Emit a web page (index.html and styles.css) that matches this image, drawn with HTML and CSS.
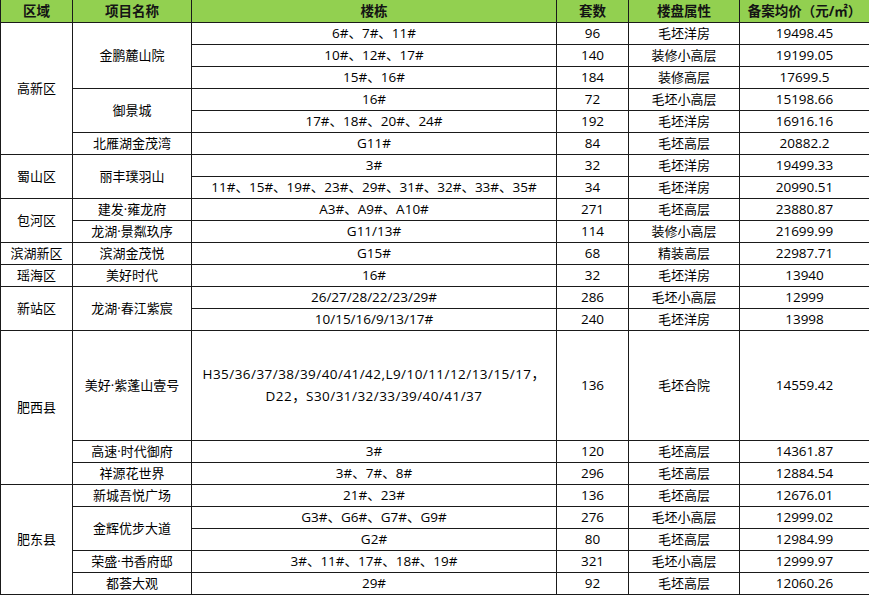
FILE: index.html
```html
<!DOCTYPE html>
<html lang="zh-CN">
<head>
<meta charset="utf-8">
<title>备案均价</title>
<link rel="stylesheet" href="styles.css">
</head>
<body>
<table class="price-table">
  <colgroup>
    <col class="c-area"><col class="c-name"><col class="c-bld"><col class="c-num"><col class="c-type"><col class="c-price">
  </colgroup>
  <thead>
    <tr class="head">
      <th>区域</th><th>项目名称</th><th>楼栋</th><th>套数</th><th>楼盘属性</th><th>备案均价（元/㎡）</th>
    </tr>
  </thead>
  <tbody>
    <tr><td rowspan="6">高新区</td><td rowspan="3">金鹏麓山院</td><td>6#、7#、11#</td><td>96</td><td>毛坯洋房</td><td>19498.45</td></tr>
    <tr><td>10#、12#、17#</td><td>140</td><td>装修小高层</td><td>19199.05</td></tr>
    <tr><td>15#、16#</td><td>184</td><td>装修高层</td><td>17699.5</td></tr>
    <tr><td rowspan="2">御景城</td><td>16#</td><td>72</td><td>毛坯小高层</td><td>15198.66</td></tr>
    <tr><td>17#、18#、20#、24#</td><td>192</td><td>毛坯洋房</td><td>16916.16</td></tr>
    <tr><td>北雁湖金茂湾</td><td>G11#</td><td>84</td><td>毛坯高层</td><td>20882.2</td></tr>

    <tr><td rowspan="2">蜀山区</td><td rowspan="2">丽丰璞羽山</td><td>3#</td><td>32</td><td>毛坯洋房</td><td>19499.33</td></tr>
    <tr><td>11#、15#、19#、23#、29#、31#、32#、33#、35#</td><td>34</td><td>毛坯洋房</td><td>20990.51</td></tr>

    <tr><td rowspan="2">包河区</td><td>建发·雍龙府</td><td>A3#、A9#、A10#</td><td>271</td><td>毛坯高层</td><td>23880.87</td></tr>
    <tr><td>龙湖·景粼玖序</td><td>G11/13#</td><td>114</td><td>装修小高层</td><td>21699.99</td></tr>

    <tr><td>滨湖新区</td><td>滨湖金茂悦</td><td>G15#</td><td>68</td><td>精装高层</td><td>22987.71</td></tr>
    <tr><td>瑶海区</td><td>美好时代</td><td>16#</td><td>32</td><td>毛坯洋房</td><td>13940</td></tr>

    <tr><td rowspan="2">新站区</td><td rowspan="2">龙湖·春江紫宸</td><td>26/27/28/22/23/29#</td><td>286</td><td>毛坯小高层</td><td>12999</td></tr>
    <tr><td>10/15/16/9/13/17#</td><td>240</td><td>毛坯洋房</td><td>13998</td></tr>

    <tr class="tall"><td rowspan="3">肥西县</td><td>美好·紫蓬山壹号</td><td class="multi">H35/36/37/38/39/40/41/42,L9/10/11/12/13/15/17，<br>D22，S30/31/32/33/39/40/41/37</td><td>136</td><td>毛坯合院</td><td>14559.42</td></tr>
    <tr><td>高速·时代御府</td><td>3#</td><td>120</td><td>毛坯高层</td><td>14361.87</td></tr>
    <tr><td>祥源花世界</td><td>3#、7#、8#</td><td>296</td><td>毛坯高层</td><td>12884.54</td></tr>

    <tr><td rowspan="5">肥东县</td><td>新城吾悦广场</td><td>21#、23#</td><td>136</td><td>毛坯高层</td><td>12676.01</td></tr>
    <tr><td rowspan="2">金辉优步大道</td><td>G3#、G6#、G7#、G9#</td><td>276</td><td>毛坯小高层</td><td>12999.02</td></tr>
    <tr><td>G2#</td><td>80</td><td>毛坯高层</td><td>12984.99</td></tr>
    <tr><td>荣盛·书香府邸</td><td>3#、11#、17#、18#、19#</td><td>321</td><td>毛坯小高层</td><td>12999.97</td></tr>
    <tr><td>都荟大观</td><td>29#</td><td>92</td><td>毛坯高层</td><td>12060.26</td></tr>
  </tbody>
</table>
</body>
</html>
```

FILE: styles.css
```css
html, body {
  margin: 0;
  padding: 0;
  background: #ffffff;
}

.price-table {
  border-collapse: collapse;
  table-layout: fixed;
  width: 869px;
  font-family: "Open Sans", "Noto Sans CJK SC", sans-serif;
  font-size: 13px;
  color: #000000;
}

.c-area { width: 72px; }
.c-name { width: 119px; }
.c-bld { width: 365px; }
.c-num { width: 72px; }
.c-type { width: 111px; }
.c-price { width: 130px; }

.price-table th,
.price-table td {
  border: 1px solid #1a1a1a;
  padding: 0;
  text-align: center;
  vertical-align: middle;
  line-height: 20px;
  white-space: nowrap;
}

/* numeric / building columns use slightly wider Latin text */
.price-table td:last-child,
.price-table td:nth-last-child(3),
.price-table td:nth-last-child(4) {
  font-size: 13.5px;
}

.price-table tr {
  height: 22px;
}

.head th {
  background: #92d050;
  font-weight: bold;
  font-size: 13.5px;
  border-top: none;
  color: #141414;
}

.price-table tr.tall {
  height: 110px;
}

.price-table td.multi {
  line-height: 22px;
  letter-spacing: 0.45px;
}
```
